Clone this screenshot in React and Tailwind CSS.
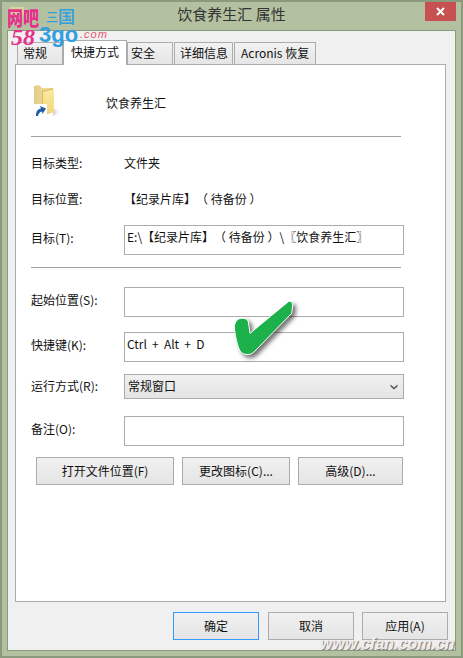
const FONT = "font-['Noto_Sans_CJK_SC','Noto_Sans',sans-serif]";

const TABS = [
  { label: '常规', w: 'w-[46px] pl-[5px]' },
  { label: '快捷方式', w: 'w-[64px] pl-[7px]', active: true },
  { label: '安全', w: 'w-[46px] pl-[3px]' },
  { label: '详细信息', w: 'w-[59px] pl-[5px]' },
  { label: 'Acronis 恢复', w: 'w-[82px] pl-[6px]' },
];

function Tab({ label, w, active }) {
  if (active) {
    return (
      <div className={`${w} h-[25px] -mt-[2px] -mb-px z-10 -ml-px -mr-px bg-white border border-b-0 border-[#acacac] flex items-center pb-[2px] text-[12px] text-[#111]`}>
        {label}
      </div>
    );
  }
  return (
    <div className={`${w} h-[22px] bg-gradient-to-b from-[#f2f2f2] to-[#e5e5e5] border border-b-0 border-[#acacac] flex items-center pb-[1px] text-[12px] text-[#111]`}>
      {label}
    </div>
  );
}

function Field({ label, value, className = '' }) {
  return (
    <div className={`flex items-center ${className}`}>
      <div className="w-[93px] shrink-0 pb-[5px]">{label}</div>
      <div className="w-[280px] h-[30px] border border-[#acacac] bg-white flex items-center pl-[2px] pb-[6px] [text-spacing-trim:space-all]">{value}</div>
    </div>
  );
}

function Btn({ children, w, focused, className = '' }) {
  return (
    <div className={`${w} h-[28px] flex items-center justify-center pb-px border bg-gradient-to-b from-[#f0f0f0] to-[#e5e5e5] text-[12px] text-[#111] ${focused ? 'border-[#3399ff]' : 'border-[#acacac]'} ${className}`}>
      {children}
    </div>
  );
}

function FolderIcon() {
  return (
    <svg width="32" height="34" viewBox="0 0 32 34" className="block">
      <defs>
        <linearGradient id="f1" x1="0" y1="0" x2="1" y2="0">
          <stop offset="0" stopColor="#e3cc86" />
          <stop offset="1" stopColor="#f3e3a8" />
        </linearGradient>
        <linearGradient id="f2" x1="0" y1="0" x2="0" y2="1">
          <stop offset="0" stopColor="#fbeaa0" />
          <stop offset="1" stopColor="#f0d67e" />
        </linearGradient>
        <linearGradient id="f3" x1="0" y1="0" x2="1" y2="0">
          <stop offset="0" stopColor="#cfcfcf" />
          <stop offset="1" stopColor="#ffffff" stopOpacity="0" />
        </linearGradient>
      </defs>
      <path d="M20 23 L29 27 L20 31 Z" fill="url(#f3)" />
      <path d="M1 1 L6 0 L9 3 L20 3 L20 27 L1 26 Z" fill="url(#f1)" />
      <path d="M9 6 L20 3 L20 27 L9 31 Z" fill="#d9b95e" />
      <path d="M10 7 L21 4 L21 27 L10 30 Z" fill="url(#f2)" />
      <rect x="0" y="19" width="14" height="14" fill="#ffffff" />
      <path d="M3 31 C3 26 5 24 8 23.5 L7 21 L13 23.5 L9.5 29 L9 26.5 C7 27 5.5 28.5 5 31 Z" fill="#1d5fa8" />
    </svg>
  );
}

export default function App() {
  return (
    <div className={`relative w-[463px] h-[658px] overflow-hidden bg-[#b3c1a0] border-2 border-[#8a9a7c] ${FONT}`}>
      {/* title bar */}
      <div className="relative h-[28px] flex items-center justify-center pb-[3px] text-[15px] text-[#333]">
        饮食养生汇 属性
        <div className="absolute right-[5px] top-[-1px] w-[31px] h-[20px] bg-[#c75050] flex items-center justify-center">
          <svg width="9" height="9" viewBox="0 0 9 9">
            <path d="M1 1 L8 8 M8 1 L1 8" stroke="#fff" strokeWidth="2" />
          </svg>
        </div>
      </div>

      {/* client area */}
      <div className="ml-[5px] w-[449px] h-[621px] bg-[#f0f0f0] border border-[#8a9a7c] pl-[7px] pt-[11px]">
        <div className="flex pl-[2px] h-[22px] gap-px">
          {TABS.map((t) => (
            <Tab key={t.label} {...t} />
          ))}
        </div>

        <div className="relative w-[431px] h-[538px] bg-white border border-[#acacac] pl-[15px] text-[12px] text-[#111]">
          <div className="flex items-center h-[71px] pl-[2px] pt-[3px]">
            <FolderIcon />
            <div className="ml-[41px] pt-[1px]">饮食养生汇</div>
          </div>
          <div className="w-[370px] h-px bg-[#a0a0a0]" />

          <div className="flex items-center mt-[17px] h-[18px]">
            <div className="w-[93px]">目标类型:</div>
            <div>文件夹</div>
          </div>
          <div className="flex items-center mt-[18px] h-[18px]">
            <div className="w-[93px]">目标位置:</div>
            <div className="[text-spacing-trim:space-all]">【纪录片库】（ 待备份 ）</div>
          </div>
          <Field className="mt-[17px]" label="目标(T):" value="E:\【纪录片库】（ 待备份 ）\〖饮食养生汇〗" />
          <div className="w-[370px] h-px bg-[#a0a0a0] mt-[12px]" />

          <Field className="mt-[19px]" label="起始位置(S):" />
          <Field className="mt-[15px]" label="快捷键(K):" value={<span className="[word-spacing:2.5px]">Ctrl + Alt + D</span>} />
          <div className="flex items-center mt-[12px]">
            <div className="w-[93px] shrink-0 pb-[2px]">运行方式(R):</div>
            <div className="w-[280px] h-[25px] border border-[#acacac] bg-gradient-to-b from-[#f0f0f0] to-[#e5e5e5] flex items-center justify-between pl-[3px] pr-[5px]">
              <span className="pb-[2px]">常规窗口</span>
              <svg width="8" height="6" viewBox="0 0 8 6">
                <path d="M0.5 0.5 L4 3.5 L7.5 0.5 L7.5 2.5 L4 5.5 L0.5 2.5 Z" fill="#555" />
              </svg>
            </div>
          </div>
          <Field className="mt-[17px]" label="备注(O):" />

          <div className="flex ml-[5px] mt-[11px] gap-[8px]">
            <Btn w="w-[138px]">打开文件位置(F)</Btn>
            <Btn w="w-[108px]">更改图标(C)...</Btn>
            <Btn w="w-[105px]">高级(D)...</Btn>
          </div>
        </div>

        <div className="flex ml-[158px] mt-[10px]">
          <Btn w="w-[86px]" focused>确定</Btn>
          <Btn w="w-[86px]" className="ml-[9px]">取消</Btn>
          <Btn w="w-[86px]" className="ml-[8px]">应用(A)</Btn>
        </div>
      </div>

      {/* green check mark pasted over the dialog */}
      <svg width="72" height="68" viewBox="0 0 72 68" className="absolute left-[228px] top-[294px] drop-shadow-[3px_3px_2px_rgba(0,0,0,0.55)]">
        <path
          d="M4.3 30.7 C5 25 8 22.3 11.7 22.3 C15 22 17.5 23 18.3 25.7 L20 37.3 L58.3 5.7 C60.5 4.5 62.7 6 62.7 9 L61.7 17.3 L24 56 C22 58 20 58.5 17 58.5 C14 58.5 12 57.5 10 55 C7.5 50 5 40 4.3 30.7 Z"
          fill="#1cb14a"
          stroke="#ffffff"
          strokeWidth="1"
        />
      </svg>

      {/* site watermarks, these sit over the title bar and the tabs */}
      <div className="absolute z-20 left-[8px] top-[5px] w-[14px] h-[8px] bg-[#e8dc9e] opacity-70" />
      <span className={`absolute z-20 left-[5px] top-[5px] text-[16px] leading-[20px] font-black text-[#e6308c] scale-y-125 ${FONT}`}>网吧</span>
      <span className={`absolute z-20 left-[44px] top-[5px] text-[12px] leading-[20px] font-medium text-[#2f9fe0] ${FONT}`}>三</span>
      <span className={`absolute z-20 left-[56px] top-[4px] text-[17px] leading-[20px] font-medium text-[#2f9fe0] ${FONT}`}>国</span>
      <span className="absolute z-20 left-[9px] top-[26px] text-[24px] leading-[18px] italic font-bold text-[#e6308c] font-['Liberation_Serif',serif]">58</span>
      <span className="absolute z-20 left-[37px] top-[23px] text-[22px] leading-[19px] font-bold text-[#2f9fe0] font-['Liberation_Sans',sans-serif]">3go</span>
      <span className="absolute z-20 left-[78px] top-[26px] text-[11px] leading-[12px] tracking-[1px] italic text-[#e05a70] font-['Liberation_Sans',sans-serif]">.com</span>
      <div className="absolute z-20 left-[318px] top-[633px] text-[16px] leading-[18px] italic font-bold text-[#eeeeee] [text-shadow:1px_1px_1px_#777] font-['Liberation_Sans',sans-serif]">
        www.cfan.com.cn
      </div>
    </div>
  );
}
